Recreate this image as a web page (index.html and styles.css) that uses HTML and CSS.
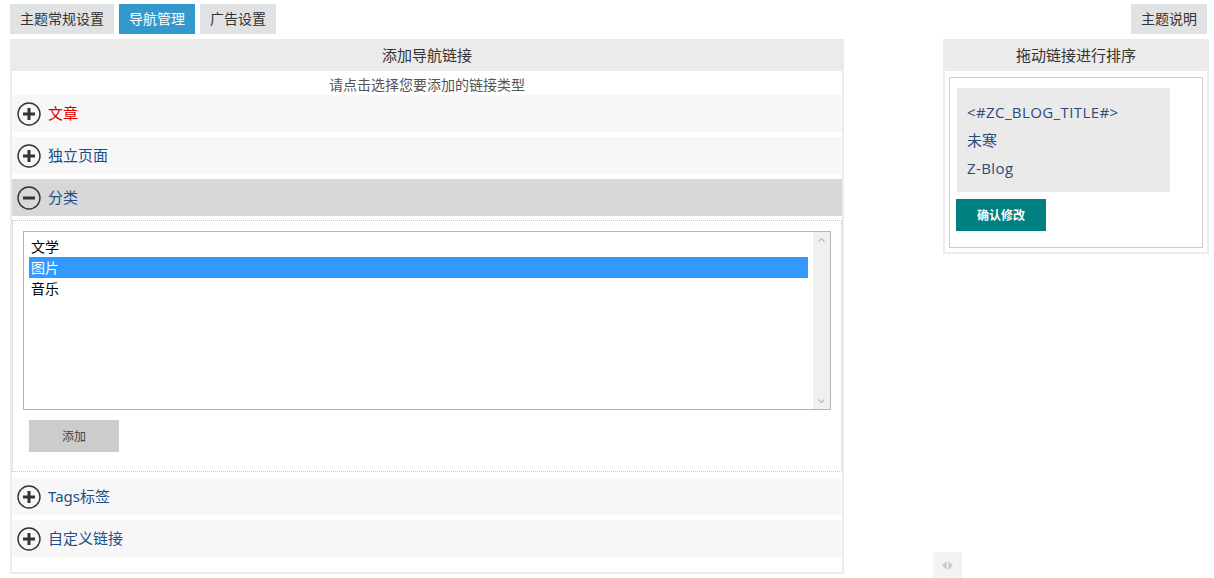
FILE: index.html
```
<!DOCTYPE html>
<html>
  <head>
    <title>导航管理</title>
    <link rel="stylesheet" href="styles.css">
  </head>
  <body>
    <div class="tabs">
      <a class="tab">主题常规设置</a>
      <a class="tab active">导航管理</a>
      <a class="tab">广告设置</a>
      <a class="tab tab-help">主题说明</a>
    </div>

    <div class="main">
      <div class="panel panel-left">
        <div class="panel-head">添加导航链接</div>
        <div class="tip">请点击选择您要添加的链接类型</div>

        <div class="row hover">
          <svg class="ico" viewBox="0 0 24 24"><circle cx="12" cy="12" r="11" /><path d="M6 12h12M12 6v12" /></svg>
          <span>文章</span>
        </div>
        <div class="row">
          <svg class="ico" viewBox="0 0 24 24"><circle cx="12" cy="12" r="11" /><path d="M6 12h12M12 6v12" /></svg>
          <span>独立页面</span>
        </div>
        <div class="row open">
          <svg class="ico" viewBox="0 0 24 24"><circle cx="12" cy="12" r="11" /><path d="M6 12h12" /></svg>
          <span>分类</span>
        </div>

        <div class="box">
          <div class="listbox">
            <div class="list-items">
              <div class="item">文学</div>
              <div class="item selected">图片</div>
              <div class="item">音乐</div>
            </div>
            <div class="scroll">
              <svg viewBox="0 0 16 16"><path d="M4 10l4-4 4 4" /></svg>
              <svg viewBox="0 0 16 16"><path d="M4 6l4 4 4-4" /></svg>
            </div>
          </div>
          <button class="btn-add">添加</button>
        </div>

        <div class="row">
          <svg class="ico" viewBox="0 0 24 24"><circle cx="12" cy="12" r="11" /><path d="M6 12h12M12 6v12" /></svg>
          <span>Tags标签</span>
        </div>
        <div class="row">
          <svg class="ico" viewBox="0 0 24 24"><circle cx="12" cy="12" r="11" /><path d="M6 12h12M12 6v12" /></svg>
          <span>自定义链接</span>
        </div>
      </div>

      <div class="panel panel-right">
        <div class="panel-head">拖动链接进行排序</div>
        <div class="sort-body">
          <div class="sort-box">
            <ul class="sort-list">
              <li class="latin">&lt;#ZC_BLOG_TITLE#&gt;</li>
              <li>未寒</li>
              <li class="latin">Z-Blog</li>
            </ul>
            <button class="btn-save">确认修改</button>
          </div>
        </div>
      </div>
    </div>

    <div class="toggle">
      <svg viewBox="0 0 14 10"><path d="M6 0v10L1 5z M8 0v10l5-5z" /></svg>
    </div>
  </body>
</html>
```

FILE: styles.css
```
body {
  margin: 0;
  background: #fff;
  font-family: "Noto Sans", "Noto Sans CJK SC", sans-serif;
  color: #333;
}

.tabs {
  display: flex;
  gap: 5px;
  padding: 4px 7px 0 10px;
}
.tab {
  height: 30px;
  line-height: 30px;
  padding: 0 10px;
  background: #e1e2e4;
  font-size: 14px;
  color: #333;
}
.tab.active {
  background: #3399cc;
  color: #fff;
}
.tab-help {
  margin-left: auto;
}

.main {
  display: flex;
  justify-content: space-between;
  padding: 5px 5px 0 10px;
}
.panel {
  border: 2px solid #ececec;
  border-top: none;
  box-sizing: border-box;
}
.panel-left {
  width: 834px;
  height: 535px;
}
.panel-right {
  width: 266px;
  align-self: flex-start;
}
.panel-head {
  height: 32px;
  line-height: 32px;
  margin: 0 -2px;
  background: #ebebeb;
  text-align: center;
  font-size: 15px;
  color: #333;
}

.tip {
  height: 24px;
  line-height: 27px;
  text-align: center;
  font-size: 14px;
  color: #555;
}

.row {
  display: flex;
  align-items: center;
  gap: 7px;
  height: 37px;
  padding-left: 5px;
  margin-bottom: 5px;
  background: #f7f7f7;
  font-size: 15px;
  line-height: 20px;
  color: #1d4e89;
}
.row span {
  margin-top: -2px;
}
.row.hover {
  color: #dd0000;
}
.row.open {
  background: #d8d8d8;
  margin-bottom: 4px;
}
.ico {
  width: 24px;
  height: 24px;
  fill: none;
  stroke: #333;
}
.ico circle {
  stroke-width: 1.4;
}
.ico path {
  stroke-width: 3;
}

.box {
  border: 1px dotted #c4c4c4;
  padding: 10px 10px 19px 10px;
  margin-bottom: 6px;
}
.listbox {
  display: flex;
  height: 179px;
  border: 1px solid #b5b5b5;
  box-sizing: border-box;
}
.list-items {
  flex: 1;
  padding: 4px 5px;
}
.item {
  height: 21px;
  line-height: 21px;
  padding-left: 2px;
  font-size: 14px;
  color: #000;
}
.item.selected {
  background: #3399ff;
  color: #fff;
}
.scroll {
  width: 17px;
  background: #f0f0f0;
  display: flex;
  flex-direction: column;
  justify-content: space-between;
  padding: 2px 0;
}
.scroll svg {
  width: 17px;
  height: 12px;
  fill: none;
  stroke: #b8b8b8;
  stroke-width: 1.5;
}
.btn-add {
  display: block;
  width: 90px;
  height: 32px;
  margin: 10px 0 0 6px;
  border: none;
  background: #cccccc;
  font-family: inherit;
  font-size: 12px;
  color: #444;
}

.sort-body {
  padding: 6px 4px 4px 4px;
}
.sort-box {
  border: 1px solid #cccccc;
  padding: 10px 6px 16px 6px;
}
.sort-list {
  list-style: none;
  margin: 0 26px 0 1px;
  padding: 10px;
  background: #eaeaea;
}
.sort-list li {
  height: 28px;
  line-height: 28px;
  font-size: 15px;
  color: #2a4a7a;
}
.sort-list li.latin {
  font-family: "Open Sans", "Noto Sans CJK SC", sans-serif;
  letter-spacing: 0.4px;
}
.btn-save {
  display: block;
  width: 90px;
  height: 32px;
  margin-top: 7px;
  border: none;
  background: #008080;
  color: #fff;
  font-family: inherit;
  font-size: 12px;
  font-weight: bold;
}

.toggle {
  position: absolute;
  left: 933px;
  top: 552px;
  width: 29px;
  height: 26px;
  background: #f3f3f3;
  display: flex;
  align-items: center;
  justify-content: center;
}
.toggle svg {
  width: 13px;
  height: 9px;
  fill: #c8c8c8;
}
```
